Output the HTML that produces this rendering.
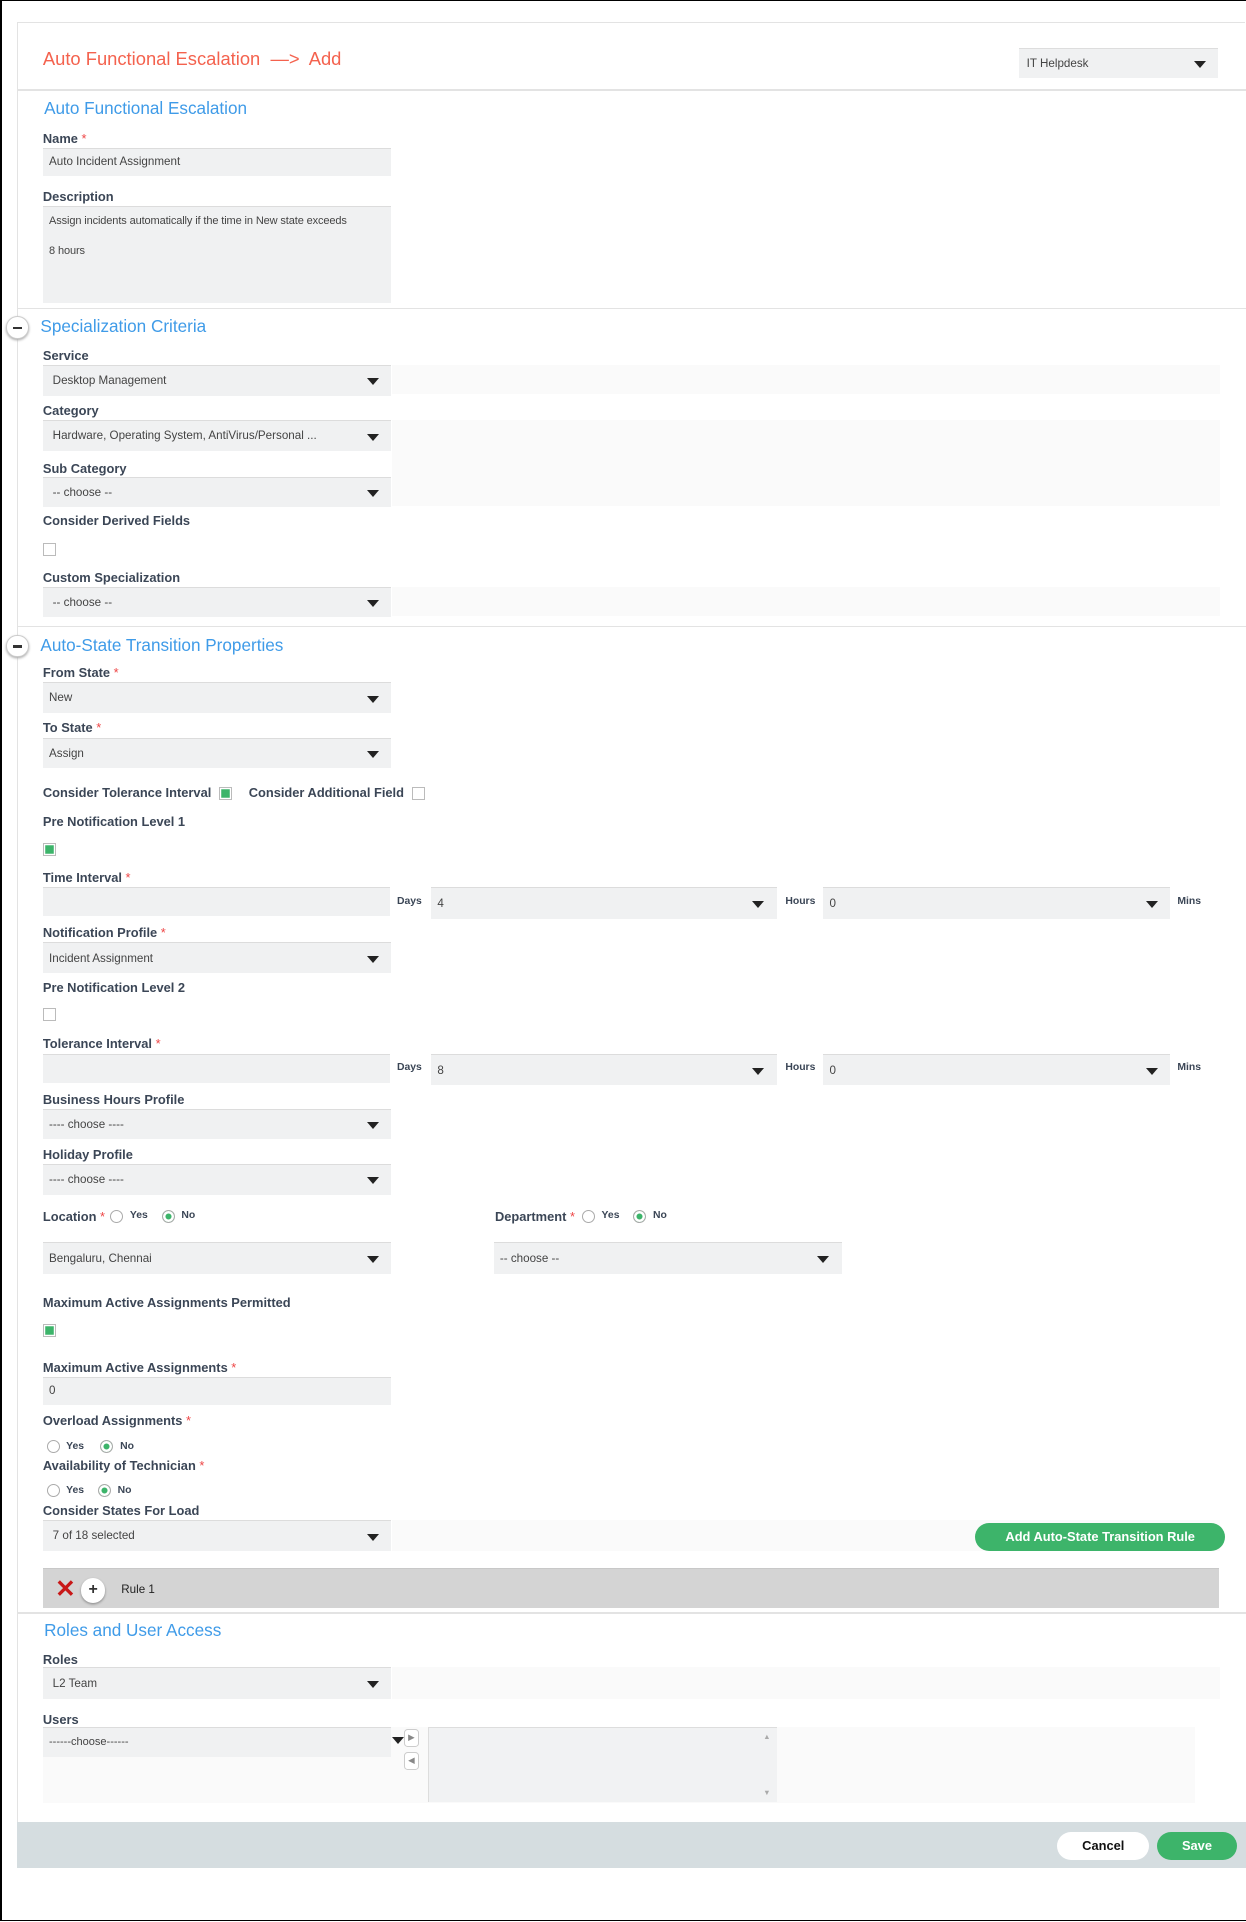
<!DOCTYPE html>
<html><head><meta charset="utf-8"><style>
html,body{margin:0;padding:0;background:#fff;}
body{width:1246px;height:1922px;overflow:hidden;}
#w{zoom:1.22517;position:relative;width:1017px;height:1569px;font-family:"Liberation Sans",Arial,sans-serif;}
.a{position:absolute;}
.lbl{position:absolute;left:35px;font-size:10.5px;font-weight:bold;color:#3b4656;white-space:nowrap;margin-top:1px;}
.lbl i{color:#e44;font-style:normal;font-weight:normal;}
.sel,.inp{position:absolute;background:#f0f1f2;border-top:1px solid #dcdcdc;box-sizing:border-box;font-size:9.5px;color:#444;padding-left:8px;white-space:nowrap;}
.sel:after{content:"";position:absolute;right:10px;top:50%;margin-top:-2px;border-left:5px solid transparent;border-right:5px solid transparent;border-top:6px solid #222;}
.h{position:absolute;font-size:14px;color:#3f9be8;margin-top:1px;}
.hr{position:absolute;left:14px;right:0;height:1px;background:#e3e3e3;}
.cb{position:absolute;width:9px;height:9px;border:1px solid #bbb;background:#fff;}
.cb.on{background:#3cb46a;box-shadow:inset 0 0 0 1px #fff;}
.band{position:absolute;left:320px;width:676px;background:#fafafa;}
.rd{position:absolute;width:9px;height:9px;border:1px solid #aaa;border-radius:50%;background:#fff;}
.rd.on{background:#3cb46a;box-shadow:inset 0 0 0 2px #fff;}
.sm{position:absolute;font-size:8.5px;font-weight:bold;color:#3b4656;}
.min{position:absolute;left:5px;width:17px;height:17px;border-radius:50%;border:1px solid #ccc;background:#fff;box-shadow:0 1px 2px #aaa;}
.min:after{content:"";position:absolute;left:5px;top:8px;width:7px;height:2px;background:#333;}
</style></head><body><div id="w">
<div class="a" style="left:0;top:0;width:1015px;height:1566px;border:1px solid #000;border-left-width:2px;"></div>
<div class="a" style="left:14px;top:18px;right:1px;height:1px;background:#e3e3e3"></div>
<div class="a" style="left:14px;top:18px;width:1px;height:1469px;background:#e3e3e3"></div>
<div class="a" style="left:35px;top:39px;font-size:15px;color:#f4624e;white-space:nowrap">Auto Functional Escalation&nbsp; —&gt;&nbsp; Add</div>
<div class="sel" style="left:832px;top:39px;width:162px;height:25px;line-height:25px;padding-left:6px;border:none;border-top:1px solid #ddd">IT Helpdesk</div>
<div class="hr" style="top:73px"></div>
<div class="h" style="left:36px;top:79px">Auto Functional Escalation</div>
<div class="lbl" style="top:106px">Name <i>*</i></div>
<div class="inp" style="left:35px;top:121px;width:284px;height:23px;line-height:22px;padding-left:5px">Auto Incident Assignment</div>
<div class="lbl" style="top:153px">Description</div>
<div class="inp" style="left:35px;top:168px;width:284px;height:79px;padding:6px 5px;line-height:12px;font-size:9px;letter-spacing:-0.1px">Assign incidents automatically if the time in New state exceeds<br><br>8 hours</div>
<div class="hr" style="top:251px"></div>
<div class="min" style="top:258px"></div>
<div class="h" style="left:33px;top:257px">Specialization Criteria</div>
<div class="lbl" style="top:283px">Service</div>
<div class="band" style="top:298px;height:24px"></div>
<div class="sel" style="left:35px;top:298px;width:284px;height:25px;line-height:24px">Desktop Management</div>
<div class="lbl" style="top:328px">Category</div>
<div class="band" style="top:343px;height:70px"></div>
<div class="sel" style="left:35px;top:343px;width:284px;height:25px;line-height:24px">Hardware, Operating System, AntiVirus/Personal ...</div>
<div class="lbl" style="top:375px">Sub Category</div>
<div class="sel" style="left:35px;top:389px;width:284px;height:25px;line-height:24px">-- choose --</div>
<div class="lbl" style="top:418px">Consider Derived Fields</div>
<div class="cb" style="left:35px;top:443px"></div>
<div class="lbl" style="top:464px">Custom Specialization</div>
<div class="band" style="top:479px;height:24px"></div>
<div class="sel" style="left:35px;top:479px;width:284px;height:25px;line-height:24px">-- choose --</div>
<div class="hr" style="top:511px"></div>
<div class="min" style="top:518px"></div>
<div class="h" style="left:33px;top:517px">Auto-State Transition Properties</div>
<div class="lbl" style="top:542px">From State <i>*</i></div>
<div class="sel" style="left:35px;top:557px;width:284px;height:25px;line-height:24px;padding-left:5px">New</div>
<div class="lbl" style="top:587px">To State <i>*</i></div>
<div class="sel" style="left:35px;top:602px;width:284px;height:25px;line-height:24px;padding-left:5px">Assign</div>
<div class="lbl" style="top:640px">Consider Tolerance Interval</div>
<div class="cb on" style="left:179px;top:642px"></div>
<div class="lbl" style="left:203px;top:640px">Consider Additional Field</div>
<div class="cb" style="left:336px;top:642px"></div>
<div class="lbl" style="top:663px">Pre Notification Level 1</div>
<div class="cb on" style="left:35px;top:688px"></div>
<div class="lbl" style="top:709px">Time Interval <i>*</i></div>
<div class="inp" style="left:35px;top:724px;width:283px;height:24px"></div>
<div class="sm" style="left:324px;top:731px">Days</div>
<div class="sel" style="left:352px;top:724px;width:282px;height:26px;line-height:26px;padding-left:5px">4</div>
<div class="sm" style="left:641px;top:731px">Hours</div>
<div class="sel" style="left:672px;top:724px;width:283px;height:26px;line-height:26px;padding-left:5px">0</div>
<div class="sm" style="left:961px;top:731px">Mins</div>
<div class="lbl" style="top:754px">Notification Profile <i>*</i></div>
<div class="sel" style="left:35px;top:769px;width:284px;height:25px;line-height:26px;padding-left:5px">Incident Assignment</div>
<div class="lbl" style="top:799px">Pre Notification Level 2</div>
<div class="cb" style="left:35px;top:823px"></div>
<div class="lbl" style="top:845px">Tolerance Interval <i>*</i></div>
<div class="inp" style="left:35px;top:860px;width:283px;height:24px"></div>
<div class="sm" style="left:324px;top:867px">Days</div>
<div class="sel" style="left:352px;top:860px;width:282px;height:26px;line-height:26px;padding-left:5px">8</div>
<div class="sm" style="left:641px;top:867px">Hours</div>
<div class="sel" style="left:672px;top:860px;width:283px;height:26px;line-height:26px;padding-left:5px">0</div>
<div class="sm" style="left:961px;top:867px">Mins</div>
<div class="lbl" style="top:890px">Business Hours Profile</div>
<div class="sel" style="left:35px;top:905px;width:284px;height:25px;line-height:25px;padding-left:5px">---- choose ----</div>
<div class="lbl" style="top:935px">Holiday Profile</div>
<div class="sel" style="left:35px;top:950px;width:284px;height:25px;line-height:25px;padding-left:5px">---- choose ----</div>
<div class="lbl" style="top:986px">Location <i>*</i></div>
<div class="rd" style="left:90px;top:988px"></div><div class="sm" style="left:106px;top:988px">Yes</div>
<div class="rd on" style="left:132px;top:988px"></div><div class="sm" style="left:148px;top:988px">No</div>
<div class="lbl" style="left:404px;top:986px">Department <i>*</i></div>
<div class="rd" style="left:475px;top:988px"></div><div class="sm" style="left:491px;top:988px">Yes</div>
<div class="rd on" style="left:517px;top:988px"></div><div class="sm" style="left:533px;top:988px">No</div>
<div class="sel" style="left:35px;top:1014px;width:284px;height:26px;line-height:26px;padding-left:5px">Bengaluru, Chennai</div>
<div class="sel" style="left:403px;top:1014px;width:284px;height:26px;line-height:26px;padding-left:5px">-- choose --</div>
<div class="lbl" style="top:1056px">Maximum Active Assignments Permitted</div>
<div class="cb on" style="left:35px;top:1081px"></div>
<div class="lbl" style="top:1109px">Maximum Active Assignments <i>*</i></div>
<div class="inp" style="left:35px;top:1124px;width:284px;height:23px;line-height:22px;padding-left:5px">0</div>
<div class="lbl" style="top:1152px">Overload Assignments <i>*</i></div>
<div class="rd" style="left:38px;top:1175px"></div><div class="sm" style="left:54px;top:1176px">Yes</div>
<div class="rd on" style="left:82px;top:1175px"></div><div class="sm" style="left:98px;top:1176px">No</div>
<div class="lbl" style="top:1189px">Availability of Technician <i>*</i></div>
<div class="rd" style="left:38px;top:1211px"></div><div class="sm" style="left:54px;top:1212px">Yes</div>
<div class="rd on" style="left:80px;top:1211px"></div><div class="sm" style="left:96px;top:1212px">No</div>
<div class="lbl" style="top:1226px">Consider States For Load</div>
<div class="band" style="top:1241px;height:25px"></div>
<div class="sel" style="left:35px;top:1241px;width:284px;height:25px;line-height:25px">7 of 18 selected</div>
<div class="a" style="left:796px;top:1243px;width:204px;height:23px;border-radius:12px;background:#3db46a;color:#fff;font-size:10.5px;font-weight:bold;text-align:center;line-height:23px">Add Auto-State Transition Rule</div>
<div class="a" style="left:35px;top:1280px;width:960px;height:32px;background:#d4d4d4;border-top:1px solid #c8c8c8"></div>
<div class="a" style="left:45px;top:1287px;color:#c81818;font-size:20px;font-weight:bold;line-height:22px">✕</div>
<div class="a" style="left:66px;top:1288px;width:20px;height:20px;border-radius:50%;background:#fff;box-shadow:0 1px 2px #888;text-align:center;line-height:20px;font-size:13px;font-weight:bold;color:#333">+</div>
<div class="a" style="left:99px;top:1292px;font-size:9.5px;color:#222">Rule 1</div>
<div class="hr" style="top:1316px"></div>
<div class="h" style="left:36px;top:1321px">Roles and User Access</div>
<div class="lbl" style="top:1347px">Roles</div>
<div class="band" style="top:1361px;height:26px"></div>
<div class="sel" style="left:35px;top:1361px;width:284px;height:26px;line-height:26px">L2 Team</div>
<div class="lbl" style="top:1396px">Users</div>
<div class="a" style="left:35px;top:1410px;width:940px;height:62px;background:#fafafa"></div>
<div class="inp" style="left:35px;top:1410px;width:284px;height:24px;line-height:24px;padding-left:5px;font-size:9px">------choose------</div>
<div class="a" style="left:320px;top:1418px;border-left:5px solid transparent;border-right:5px solid transparent;border-top:6px solid #222"></div>
<div class="a" style="left:330px;top:1411px;width:10px;height:13px;background:#fff;border:1px solid #ccc;border-radius:3px;font-size:7px;color:#888;text-align:center;line-height:13px">▶</div>
<div class="a" style="left:330px;top:1430px;width:10px;height:13px;background:#fff;border:1px solid #ccc;border-radius:3px;font-size:7px;color:#888;text-align:center;line-height:13px">◀</div>
<div class="a" style="left:349px;top:1410px;width:284px;height:60px;background:#f1f2f3;border-top:1px solid #ddd;border-left:1px solid #ddd"></div>
<div class="a" style="left:623px;top:1414px;font-size:6px;color:#aaa">▲</div>
<div class="a" style="left:623px;top:1459px;font-size:6px;color:#aaa">▼</div>
<div class="a" style="left:14px;top:1487px;width:1003px;height:38px;background:#d5dde0"></div>
<div class="a" style="left:863px;top:1495px;width:75px;height:23px;border-radius:12px;background:#fff;font-size:10.5px;font-weight:bold;text-align:center;line-height:23px;color:#111">Cancel</div>
<div class="a" style="left:944px;top:1495px;width:66px;height:23px;border-radius:12px;background:#3db46a;font-size:10.5px;font-weight:bold;text-align:center;line-height:23px;color:#fff">Save</div>
</div></body></html>
